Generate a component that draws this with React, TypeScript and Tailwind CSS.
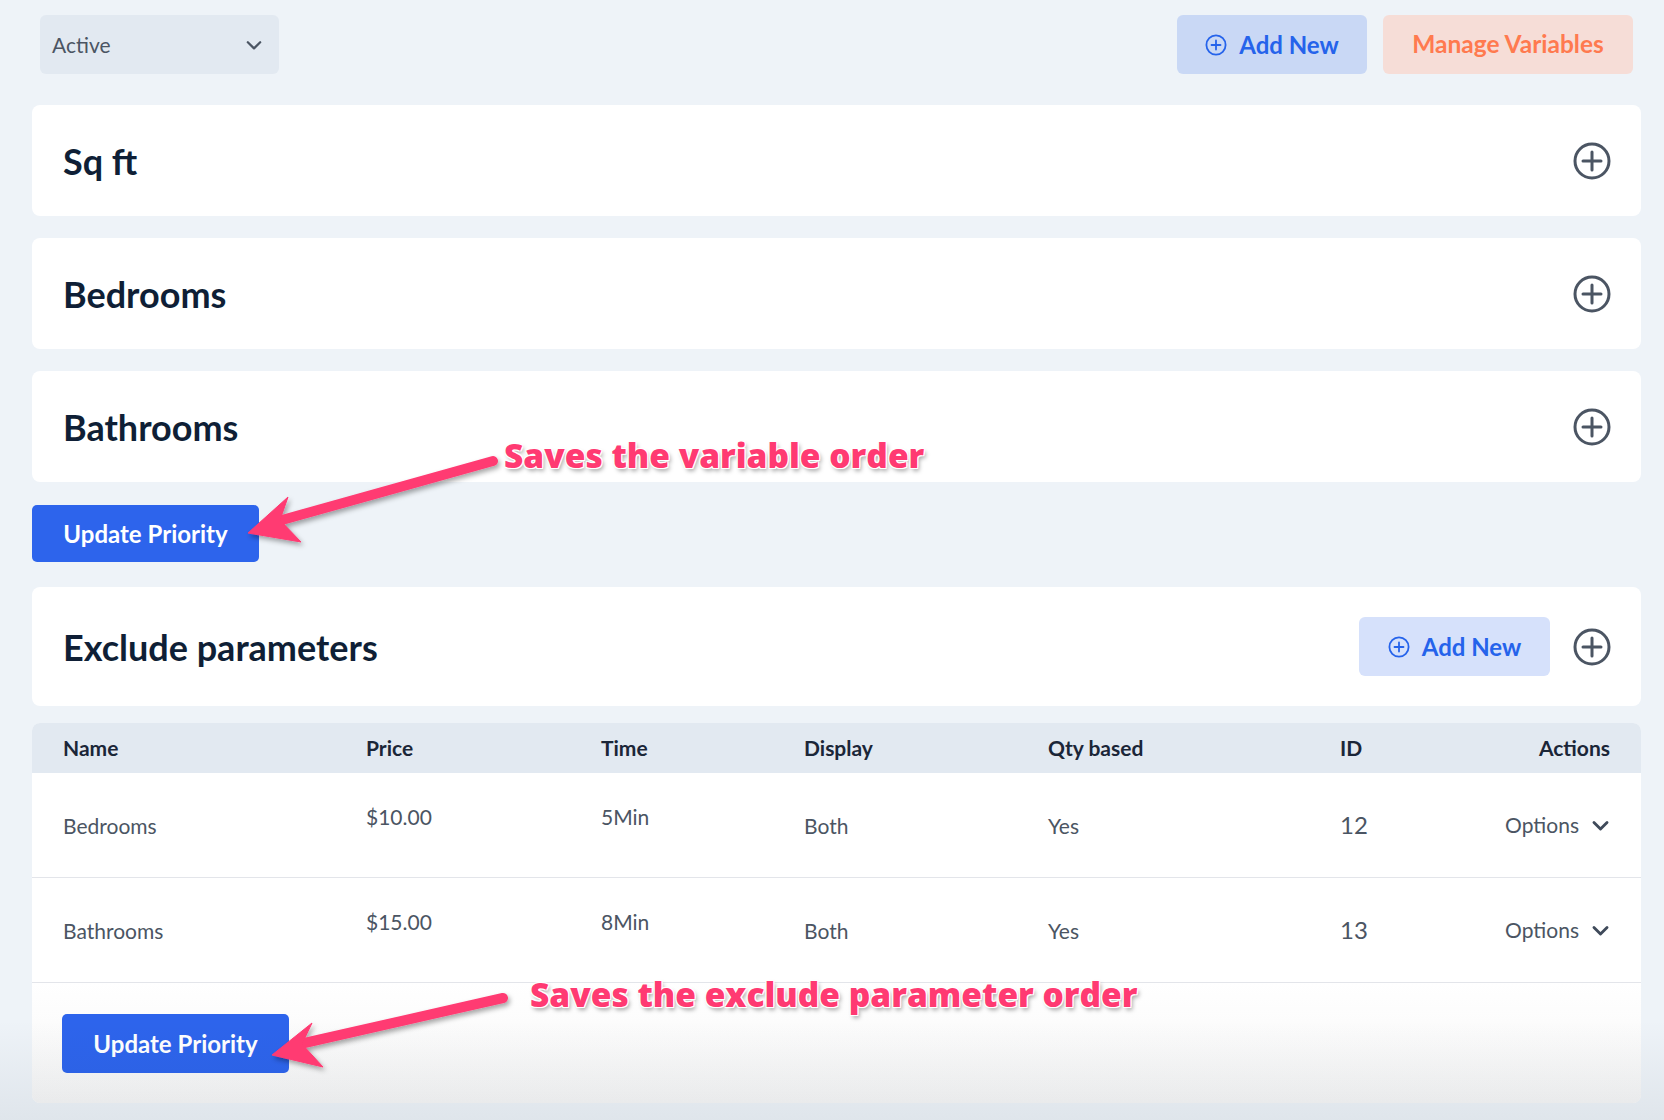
import React from "react";

const PlusCircle = ({ size = 38, stroke = 3, color = "#4b5563" }: { size?: number; stroke?: number; color?: string }) => (
  <svg width={size} height={size} viewBox="0 0 38 38" fill="none">
    <circle cx="19" cy="19" r={19 - stroke / 2 - 0.5} stroke={color} strokeWidth={stroke} />
    <path d="M19 10v18M10 19h18" stroke={color} strokeWidth={stroke} strokeLinecap="round" />
  </svg>
);

const SmallPlus = ({ color = "#2563eb" }: { color?: string }) => (
  <svg width="22" height="22" viewBox="0 0 22 22" fill="none">
    <circle cx="11" cy="11" r="9.6" stroke={color} strokeWidth="1.8" />
    <path d="M11 6.5v9M6.5 11h9" stroke={color} strokeWidth="1.8" strokeLinecap="round" />
  </svg>
);

const Chevron = ({ size = 16, color = "#4b5563", sw = 2 }: { size?: number; color?: string; sw?: number }) => (
  <svg width={size} height={size} viewBox="0 0 16 16" fill="none">
    <path d="M2.5 5.5L8 11l5.5-5.5" stroke={color} strokeWidth={sw} strokeLinecap="round" strokeLinejoin="round" />
  </svg>
);

const Card = ({ title }: { title: string }) => (
  <div className="flex h-[111px] items-center justify-between rounded-[8px] bg-white pl-[31px] pr-[30px]">
    <div className="text-[36px] font-bold text-[#0f1f36]">{title}</div>
    <PlusCircle />
  </div>
);

const rows = [
  { name: "Bedrooms", price: "$10.00", time: "5Min", display: "Both", qty: "Yes", id: "12" },
  { name: "Bathrooms", price: "$15.00", time: "8Min", display: "Both", qty: "Yes", id: "13" },
];

const gridCols = "grid grid-cols-[303px_235px_203px_244px_292px_1fr_auto] pl-[31px] pr-[31px]";

const outline =
  "[text-shadow:0_0_2px_#fff,0_0_2px_#fff,1px_1px_0_#fff,-1px_-1px_0_#fff,1px_-1px_0_#fff,-1px_1px_0_#fff,2px_3px_4px_rgba(0,0,0,0.35)]";

export default function App() {
  return (
    <div
      className="relative min-h-[1120px] w-full bg-[#eef3f8] pt-[15px]"
      style={{ fontFamily: "Lato, 'Open Sans', sans-serif" }}
    >
      <div className="ml-[32px] w-[1609px]">
        {/* Top bar */}
        <div className="flex items-center justify-between px-[8px]">
          <div className="flex h-[59px] w-[239px] items-center justify-between rounded-[6px] bg-[#e2e9f1] pl-[12px] pr-[16px]">
            <span className="text-[21px] text-[#4b5563]">Active</span>
            <Chevron size={18} />
          </div>
          <div className="flex items-center gap-[16px]">
            <div className="flex h-[59px] w-[190px] items-center justify-center gap-[12px] rounded-[6px] bg-[#c9d8f5]">
              <SmallPlus />
              <span className="text-[24px] font-bold text-[#2563eb]">Add New</span>
            </div>
            <div className="flex h-[59px] w-[250px] items-center justify-center rounded-[6px] bg-[#f6ddd7]">
              <span className="text-[24.5px] font-bold text-[#ff7a4f]">Manage Variables</span>
            </div>
          </div>
        </div>

        <div className="mt-[31px] flex flex-col gap-[22px]">
          <Card title="Sq ft" />
          <Card title="Bedrooms" />
          <Card title="Bathrooms" />
        </div>

        <div className="mt-[23px]">
          <button className="h-[57px] w-[227px] rounded-[5px] bg-[#2d64ec] text-[24px] font-bold text-white">
            Update Priority
          </button>
        </div>

        {/* Exclude parameters card */}
        <div className="mt-[25px] flex h-[119px] items-center justify-between rounded-[8px] bg-white pl-[31px] pr-[30px]">
          <div className="text-[36px] font-bold text-[#0f1f36]">Exclude parameters</div>
          <div className="flex items-center gap-[23px]">
            <div className="flex h-[59px] w-[191px] items-center justify-center gap-[12px] rounded-[6px] bg-[#d6e1fb]">
              <SmallPlus />
              <span className="text-[24px] font-bold text-[#2563eb]">Add New</span>
            </div>
            <PlusCircle />
          </div>
        </div>

        {/* Table */}
        <div className="mt-[17px] overflow-hidden rounded-[8px] bg-white">
          <div className={`${gridCols} h-[50px] items-center bg-[#e2e9f1] text-[21px] font-bold text-[#1b2638]`}>
            <div>Name</div>
            <div>Price</div>
            <div>Time</div>
            <div>Display</div>
            <div>Qty based</div>
            <div>ID</div>
            <div className="text-right">Actions</div>
          </div>
          {rows.map((r) => (
            <div
              key={r.id}
              className={`${gridCols} h-[105px] items-center border-b border-[#e3e5ea] text-[21px] text-[#4b5563]`}
            >
              <div className="pt-[2px]">{r.name}</div>
              <div className="-mt-[16px]">{r.price}</div>
              <div className="-mt-[16px]">{r.time}</div>
              <div className="pt-[2px]">{r.display}</div>
              <div className="pt-[2px]">{r.qty}</div>
              <div className="text-[24px]">{r.id}</div>
              <div className="flex items-center gap-[12px]">
                <span>Options</span>
                <Chevron size={19} color="#3f4a5a" sw={2.4} />
              </div>
            </div>
          ))}
          <div className="h-[120px] bg-gradient-to-b from-white to-[#f6f6f6] pl-[30px] pt-[31px]">
            <button className="h-[59px] w-[227px] rounded-[5px] bg-[#2d64ec] text-[24px] font-bold text-white">
              Update Priority
            </button>
          </div>
        </div>
      </div>

      {/* bottom fade */}
      <div className="pointer-events-none absolute bottom-0 left-0 h-[100px] w-full bg-gradient-to-b from-transparent to-[rgba(30,50,70,0.07)]" />

      {/* Annotations */}
      <svg
        className="pointer-events-none absolute left-0 top-0"
        width="1664"
        height="1120"
        viewBox="0 0 1664 1120"
      >
        <defs>
          <filter id="sh" x="-20%" y="-20%" width="140%" height="140%">
            <feDropShadow dx="2" dy="3" stdDeviation="2.5" floodColor="#000" floodOpacity="0.35" />
          </filter>
        </defs>
        <g filter="url(#sh)" fill="#ff3a72" stroke="#ff3a72">
          <line x1="493" y1="461" x2="282" y2="520" strokeWidth="10" strokeLinecap="round" />
          <polygon points="248,533 288,497 280,520 301,542" strokeWidth="1" strokeLinejoin="round" />
          <line x1="503" y1="998" x2="300" y2="1044" strokeWidth="10" strokeLinecap="round" />
          <polygon points="272,1055 312,1023 302,1044 323,1067" strokeWidth="1" strokeLinejoin="round" />
        </g>
      </svg>
      <div
        className={`pointer-events-none absolute left-[504px] top-[433px] text-[33.5px] font-extrabold leading-[44px] text-[#ff3a72] ${outline}`}
        style={{ fontFamily: "'Open Sans', sans-serif" }}
      >
        Saves the variable order
      </div>
      <div
        className={`pointer-events-none absolute left-[530px] top-[972px] text-[33.5px] font-extrabold leading-[44px] text-[#ff3a72] ${outline}`}
        style={{ fontFamily: "'Open Sans', sans-serif" }}
      >
        Saves the exclude parameter order
      </div>
    </div>
  );
}
